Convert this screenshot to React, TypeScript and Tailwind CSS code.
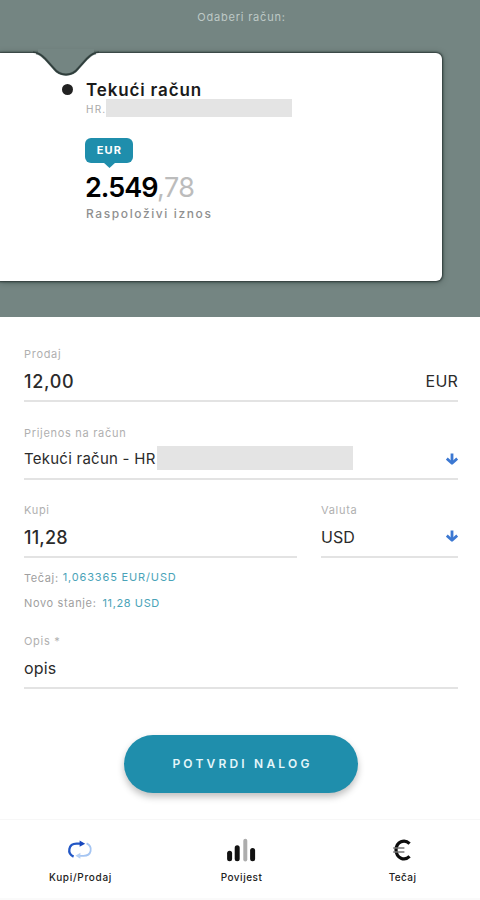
import React from 'react';

interface FieldProps {
  label: string;
  className?: string;
  rowClassName?: string;
  children: React.ReactNode;
}

interface NavItem {
  id: string;
  label: string;
  labelClass: string;
  icon: React.ComponentType;
}

const ArrowDown: React.FC = () => (
  <svg className="-mt-px" width="12" height="13" viewBox="0 0 12 13" fill="none" stroke="#3c78d2" strokeWidth="2.8">
    <path d="M6 0.5V9.500" />
    <path d="M0.8 5.6L6 10.2L11.2 5.6" strokeLinejoin="round" />
  </svg>
);

const ExchangeIcon: React.FC = () => (
  <svg className="-ml-[2px]" width="26" height="22" viewBox="0 0 26 22" fill="none">
    <path d="M6.6 17.6C3.2 16 1.8 13 2.4 10C3.1 6.4 6 4.7 9.5 4.7H14" stroke="#2257c5" strokeWidth="2.3" />
    <path d="M12.6 1.4L18.2 4.7L12.6 7.8Z" fill="#1747bd" />
    <path d="M19.6 4.4C23 6 24.2 9 23.6 12C22.9 15.4 20 16.8 16.5 16.8H12" stroke="#a5c5f2" strokeWidth="1.8" />
    <path d="M13.4 13.8L8.4 16.8L13.4 19.8Z" fill="#b5d0f5" />
  </svg>
);

const HistoryIcon: React.FC = () => (
  <svg className="-ml-[2px]" width="30" height="26" viewBox="0 0 30 26" strokeWidth="5" strokeLinecap="round">
    <path d="M3.6 16.2V21.8" stroke="#111" />
    <path d="M11.2 10.8V21.8" stroke="#111" />
    <path d="M19.3 3.8V22.4" stroke="#adadad" strokeWidth="4" />
    <path d="M26.6 13.6V21.8" stroke="#111" />
  </svg>
);

const EuroIcon: React.FC = () => (
  <svg className="-ml-px" width="20" height="22" viewBox="0 0 20 22" fill="none">
    <path d="M17.6 4.6C12.4 -0.4 4.4 2.6 4 11C4.4 19.4 12.4 22.4 17.6 17.4" stroke="#0c0c0c" strokeWidth="3.2" />
    <path d="M1.2 9H12.4M1.2 13H12.4" stroke="#777" strokeWidth="1.4" />
  </svg>
);

const navItems: NavItem[] = [
  { id: 'exchange', label: 'Kupi/Prodaj', labelClass: 'tracking-[0.7px]', icon: ExchangeIcon },
  { id: 'history', label: 'Povijest', labelClass: 'tracking-[0.5px]', icon: HistoryIcon },
  { id: 'rates', label: 'Tečaj', labelClass: 'tracking-[0.4px]', icon: EuroIcon }
];

const Field: React.FC<FieldProps> = ({ label, className = '', rowClassName = 'h-[38px]', children }) => (
  <div className={`border-b-2 border-[#e3e3e3] ${className}`}>
    <div className="text-[11px] leading-4 tracking-[0.7px] text-[#b0b0b0]">{label}</div>
    <div className={`flex items-center justify-between text-[#2b2b2b] ${rowClassName}`}>{children}</div>
  </div>
);

const AccountCard: React.FC = () => (
  <div className="relative h-[228px] w-[442px] rounded-r-md bg-white pl-[86px] pt-[27px] shadow-[0_0_2px_1px_#2d3a38,0_1px_6px_rgba(30,45,42,0.5)]">
    <svg className="absolute left-[28px] -top-[7px]" width="76" height="33" viewBox="0 -3 76 33">
      <path
        d="M10 0H66V5C63 6.500 61 8 59 10L50 20C44 28.500 32 28.500 26 20L17 10C15 8 13 6.500 10 5Z"
        fill="#748582"
      />
      <path
        d="M8 4C11 4.500 14 6.500 17 9.500L26 19.500C32 27.500 44 27.500 50 19.500L59 9.500C62 6.500 65 4.500 68 4"
        fill="none"
        stroke="#5b6c69"
        strokeWidth="2.6"
      />
      <path
        d="M5 3.300C10 3.300 13 5.500 17 9.500L26 19.500C32 27.500 44 27.500 50 19.500L59 9.500C63 5.500 66 3.300 71 3.300"
        fill="none"
        stroke="#2f3d3b"
        strokeWidth="1.6"
      />
    </svg>
    <span className="absolute left-[62px] top-[31px] h-[11px] w-[11px] rounded-full bg-[#222]" />
    <div className="text-[17px] font-semibold leading-5 tracking-[0.85px] text-[#1a1a1a]">Tekući račun</div>
    <div className="flex h-[18px] items-center">
      <span className="w-5 text-[10px] tracking-[1.2px] text-[#a8a8a8]">HR.</span>
      <span className="-mt-[2px] h-[18px] w-[186px] bg-[#e4e4e4]" />
    </div>
    <div className="relative -ml-px mt-5 flex h-[25px] w-[48px] items-center justify-center rounded-md bg-[#1f8eac] pl-px text-[11px] font-bold tracking-[1.2px] text-white">
      EUR
      <svg className="absolute left-[18px] top-6" width="13" height="6" viewBox="0 0 13 6">
        <path d="M0 0H13L6.500 6Z" fill="#1f8eac" />
      </svg>
    </div>
    <div className="-ml-px mt-[9px] flex text-[27px] leading-8 text-black">
      <span className="w-[72px] font-semibold tracking-[-1px]">2.549</span>
      <span className="tracking-[-0.5px] text-[#bcbcbc]">,78</span>
    </div>
    <div className="text-[12px] font-medium leading-5 tracking-[1.6px] text-[#8f8f8f]">Raspoloživi iznos</div>
  </div>
);

const App: React.FC = () => {
  return (
    <div className="flex h-[900px] w-[480px] flex-col overflow-hidden bg-white font-['Inter',sans-serif]">
      <header className="h-[317px] bg-[#748582]">
        <div className="flex h-[53px] justify-center pl-[3px] pt-[9px] text-[11px] leading-4 tracking-[0.8px] text-[#bec9c6]">
          Odaberi račun:
        </div>
        <AccountCard />
      </header>

      <main className="h-[502px] px-6 pt-[29px] pr-[22px]">
        <Field label="Prodaj">
          <span className="text-[18px] font-medium tracking-[0.7px]">12,00</span>
          <span className="text-[16px] tracking-[0.2px]">EUR</span>
        </Field>

        <Field label="Prijenos na račun" className="mt-[23px]" rowClassName="h-[37px]">
          <span className="flex items-center">
            <span className="w-[133px] whitespace-nowrap text-[15px] tracking-[0.25px]">Tekući račun - HR</span>
            <span className="-mt-[3px] h-6 w-[196px] bg-[#e4e4e4]" />
          </span>
          <ArrowDown />
        </Field>

        <div className="mt-[22px] flex gap-6">
          <Field label="Kupi" className="w-[273px]">
            <span className="text-[18px] font-medium tracking-[0.2px]">11,28</span>
          </Field>
          <Field label="Valuta" className="flex-1">
            <span className="text-[16px]">USD</span>
            <ArrowDown />
          </Field>
        </div>

        <div className="mt-[10px] flex gap-[4px] text-[11px] leading-5 tracking-[0.6px] text-[#a0a0a0]">
          Tečaj: <span className="-mt-px tracking-[0.85px] text-[#4aa3b8]">1,063365 EUR/USD</span>
        </div>
        <div className="mt-[5px] flex gap-[6px] text-[11px] leading-5 tracking-[0.65px] text-[#a0a0a0]">
          Novo stanje: <span className="tracking-[0.6px] text-[#4aa3b8]">11,28 USD</span>
        </div>

        <Field label="Opis *" className="mt-5">
          <span className="text-[16px] tracking-[0.2px]">opis</span>
        </Field>

        <button className="mx-auto mt-[46px] flex h-[58px] w-[234px] items-center justify-center rounded-full bg-[#1f8eac] pl-[3px] text-[12px] font-semibold tracking-[3.2px] text-[#e4f6fa] shadow-[0_4px_7px_rgba(0,0,0,0.25)]">
          POTVRDI NALOG
        </button>
      </main>

      <nav className="flex h-[79px] border-t border-[#f7f7f7] bg-white">
        {navItems.map(({ id, label, labelClass, icon: Icon }) => (
          <button key={id} className="flex w-[161px] shrink-0 flex-col items-center pt-[17px]">
            <span className="flex h-[26px] items-center">
              <Icon />
            </span>
            <span className={`mt-[6px] text-[10px] font-medium leading-4 text-[#222] ${labelClass}`}>{label}</span>
          </button>
        ))}
      </nav>
      <div className="h-[2px] bg-[#fafafa]" />
    </div>
  );
};

export default App;
